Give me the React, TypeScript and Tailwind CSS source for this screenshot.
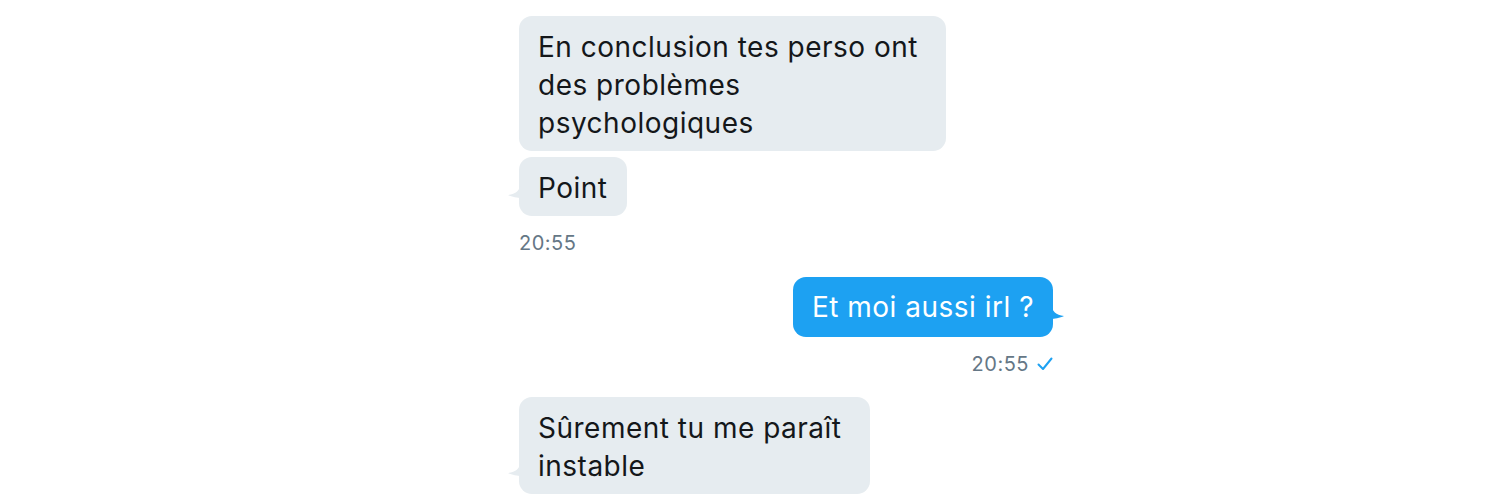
import React from "react";

type Msg = { id: number; mine: boolean; lines: string[]; tail?: boolean };

function Bubble({ mine, lines, tail }: Omit<Msg, "id">) {
  const multi = lines.length > 1;
  return (
    <div className={mine ? "relative self-end" : "relative self-start"}>
      <div
        className={
          (mine
            ? "rounded-[13px] bg-[#1da1f2] text-white pl-[19px] py-[11px] text-[28px] leading-[38px] tracking-[0.5px]"
            : "rounded-[13px] bg-[#e6ecf0] text-[#14171a] pl-[19px] pt-[12px] pb-[9px] text-[28px] leading-[38px] tracking-[0.5px]") +
          (multi ? " pr-[28px]" : " pr-[19px]")
        }
      >
        {lines.map((l, i) => (
          <div key={i} className="whitespace-nowrap">
            {l}
          </div>
        ))}
      </div>
      {tail && (
        <svg
          width="14"
          height="14"
          viewBox="0 0 14 14"
          className={mine ? "absolute right-[-12px] bottom-[18px]" : "absolute left-[-12px] bottom-[18px] -scale-x-100"}
        >
          <path d="M0 0 C1 6 5 10 13 11 C9 13 3 14 0 14 Z" fill={mine ? "#1da1f2" : "#e6ecf0"} />
        </svg>
      )}
    </div>
  );
}

export default function App() {
  return (
    <div
      className="w-[1500px] h-[500px] bg-white overflow-hidden"
      style={{ fontFamily: "Inter, 'Open Sans', sans-serif" }}
    >
      <div className="ml-[519px] w-[534px] pt-[16px] flex flex-col">
        <Bubble mine={false} lines={["En conclusion tes perso ont", "des problèmes", "psychologiques"]} />
        <div className="h-[6px]" />
        <Bubble mine={false} lines={["Point"]} tail />
        <div className="mt-[14px] text-[20px] leading-[26px] tracking-[0.5px] text-[#657786]">20:55</div>
        <div className="h-[21px]" />
        <Bubble mine lines={["Et moi aussi irl ?"]} tail />
        <div className="mt-[14px] self-end flex items-center gap-[8px] text-[20px] leading-[26px] tracking-[0.5px] text-[#657786]">
          20:55
          <svg width="16" height="14" viewBox="0 0 16 14">
            <path d="M1.5 7.5 L6 12 L14.5 1.5" fill="none" stroke="#1da1f2" strokeWidth="2" strokeLinecap="round" strokeLinejoin="round" />
          </svg>
        </div>
        <div className="h-[20px]" />
        <Bubble mine={false} lines={["Sûrement tu me paraît", "instable"]} tail />
      </div>
    </div>
  );
}
